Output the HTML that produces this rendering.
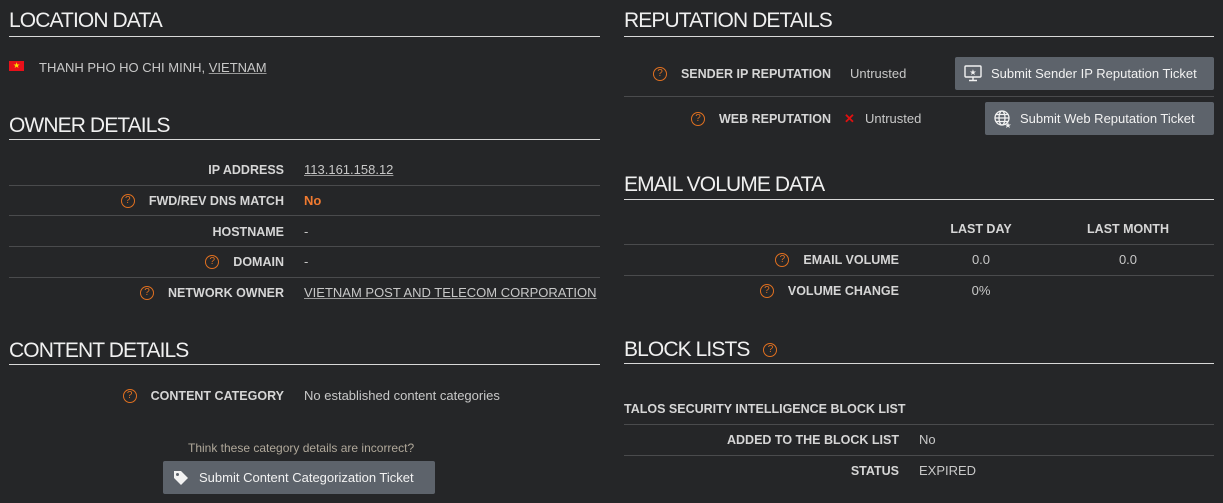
<!DOCTYPE html>
<html><head><meta charset="utf-8">
<style>
*{margin:0;padding:0;box-sizing:border-box}
body{width:1223px;height:503px;background:#252628;font-family:"Liberation Sans",sans-serif;color:#c8c8c8;position:relative;overflow:hidden;font-size:13px}
.a{position:absolute;white-space:nowrap;line-height:20px}
.h{position:absolute;font-size:21px;color:#f0f0f0;line-height:26px;letter-spacing:-0.9px;display:flex;align-items:center}
.hl{position:absolute;height:1px;background:#d8d8d8}
.rl{position:absolute;height:1px;background:#4a4b4d}
.lb{font-weight:bold;color:#d6d6d6;font-size:12.5px;text-align:right;display:flex;align-items:center;justify-content:flex-end}
.q{display:inline-flex;align-items:center;justify-content:center;width:14px;height:14px;border:1.5px solid #e07020;border-radius:50%;color:#e07020;font-size:10px;line-height:10px;font-weight:normal;margin-right:14px;letter-spacing:0}
u{text-decoration:underline;text-decoration-color:#999}
.btn{position:absolute;background:#5d636b;border-radius:2px;color:#f2f2f2;font-size:13px;line-height:33px;height:33px}
</style></head><body>
<div class="h" style="left:9px;top:8px">LOCATION DATA</div>
<div class="hl" style="left:9px;top:36px;width:591px"></div>
<div style="position:absolute;left:9px;top:61px;width:15px;height:10px;background:#e8101a"></div>
<div class="a" style="left:13px;top:56px;color:#ffe000;font-size:8px">★</div>
<div class="a" style="left:39px;top:58px">THANH PHO HO CHI MINH, <u>VIETNAM</u></div>

<div class="h" style="left:9px;top:113px">OWNER DETAILS</div>
<div class="hl" style="left:9px;top:139px;width:591px"></div>
<div class="a lb" style="right:939px;top:160px">IP ADDRESS</div>
<div class="a" style="left:304px;top:160px"><u>113.161.158.12</u></div>
<div class="rl" style="left:9px;top:185px;width:591px"></div>
<div class="a lb" style="right:939px;top:191px"><span class="q">?</span>FWD/REV DNS MATCH</div>
<div class="a" style="left:304px;top:191px;color:#f07a30;font-weight:bold">No</div>
<div class="rl" style="left:9px;top:215px;width:591px"></div>
<div class="a lb" style="right:939px;top:222px">HOSTNAME</div>
<div class="a" style="left:304px;top:222px">-</div>
<div class="rl" style="left:9px;top:246px;width:591px"></div>
<div class="a lb" style="right:939px;top:252px"><span class="q">?</span>DOMAIN</div>
<div class="a" style="left:304px;top:252px">-</div>
<div class="rl" style="left:9px;top:277px;width:591px"></div>
<div class="a lb" style="right:939px;top:283px"><span class="q">?</span>NETWORK OWNER</div>
<div class="a" style="left:304px;top:283px"><u>VIETNAM POST AND TELECOM CORPORATION</u></div>

<div class="h" style="left:9px;top:338px">CONTENT DETAILS</div>
<div class="hl" style="left:9px;top:364px;width:591px"></div>
<div class="a lb" style="right:939px;top:386px"><span class="q">?</span>CONTENT CATEGORY</div>
<div class="a" style="left:304px;top:386px">No established content categories</div>
<div class="a" style="left:188px;top:438px;font-size:12px;color:#b0a89a">Think these category details are incorrect?</div>
<div class="btn" style="left:163px;top:461px;width:272px;padding-left:36px">Submit Content Categorization Ticket</div>
<svg style="position:absolute;left:173px;top:470px" width="16" height="16" viewBox="0 0 16 16"><path d="M1 1h7l7 7-7 7-7-7z" fill="#f2f2f2"/><circle cx="4.5" cy="4.5" r="1.5" fill="#5d636b"/></svg>

<div class="h" style="left:624px;top:8px">REPUTATION DETAILS</div>
<div class="hl" style="left:624px;top:36px;width:590px"></div>
<div class="a lb" style="right:392px;top:64px"><span class="q">?</span>SENDER IP REPUTATION</div>
<div class="a" style="left:850px;top:64px">Untrusted</div>
<div class="btn" style="left:955px;top:57px;width:259px;padding-left:36px">Submit Sender IP Reputation Ticket</div>
<svg style="position:absolute;left:964px;top:65px" width="18" height="17" viewBox="0 0 18 17" fill="none" stroke="#f2f2f2" stroke-width="1.4"><rect x="1" y="1" width="16" height="11" rx="1"/><path d="M9 12v3M5 15.5h8"/><text x="9" y="10" font-size="8" fill="#f2f2f2" stroke="none" text-anchor="middle">★</text></svg>
<div class="rl" style="left:624px;top:96px;width:590px"></div>
<div class="a lb" style="right:392px;top:109px"><span class="q">?</span>WEB REPUTATION</div>
<div class="a" style="left:844px;top:109px;color:#e01010;font-weight:bold">✕</div>
<div class="a" style="left:865px;top:109px">Untrusted</div>
<div class="btn" style="left:985px;top:102px;width:229px;padding-left:35px">Submit Web Reputation Ticket</div>
<svg style="position:absolute;left:994px;top:110px" width="18" height="18" viewBox="0 0 18 18" fill="none" stroke="#f2f2f2" stroke-width="1.3"><circle cx="8" cy="8" r="7"/><ellipse cx="8" cy="8" rx="3" ry="7"/><path d="M1 8h14M2 4.5h12M2 11.5h12"/><text x="14" y="18" font-size="8" fill="#f2f2f2" stroke="none" text-anchor="middle">★</text></svg>

<div class="h" style="left:624px;top:172px">EMAIL VOLUME DATA</div>
<div class="hl" style="left:624px;top:199px;width:590px"></div>
<div class="a lb" style="left:931px;width:100px;justify-content:center;top:219px">LAST DAY</div>
<div class="a lb" style="left:1068px;width:120px;justify-content:center;top:219px">LAST MONTH</div>
<div class="rl" style="left:624px;top:244px;width:590px"></div>
<div class="a lb" style="right:324px;top:250px"><span class="q">?</span>EMAIL VOLUME</div>
<div class="a" style="left:931px;width:100px;text-align:center;top:250px">0.0</div>
<div class="a" style="left:1068px;width:120px;text-align:center;top:250px">0.0</div>
<div class="rl" style="left:624px;top:275px;width:590px"></div>
<div class="a lb" style="right:324px;top:281px"><span class="q">?</span>VOLUME CHANGE</div>
<div class="a" style="left:931px;width:100px;text-align:center;top:281px">0%</div>

<div class="h" style="left:624px;top:337px">BLOCK LISTS<span class="q" style="margin-left:14px">?</span></div>
<div class="hl" style="left:624px;top:363px;width:590px"></div>
<div class="a lb" style="left:624px;top:399px;justify-content:flex-start">TALOS SECURITY INTELLIGENCE BLOCK LIST</div>
<div class="rl" style="left:624px;top:424px;width:590px"></div>
<div class="a lb" style="right:324px;top:430px">ADDED TO THE BLOCK LIST</div>
<div class="a" style="left:919px;top:430px">No</div>
<div class="rl" style="left:624px;top:455px;width:590px"></div>
<div class="a lb" style="right:324px;top:461px">STATUS</div>
<div class="a" style="left:919px;top:461px">EXPIRED</div>
</body></html>
